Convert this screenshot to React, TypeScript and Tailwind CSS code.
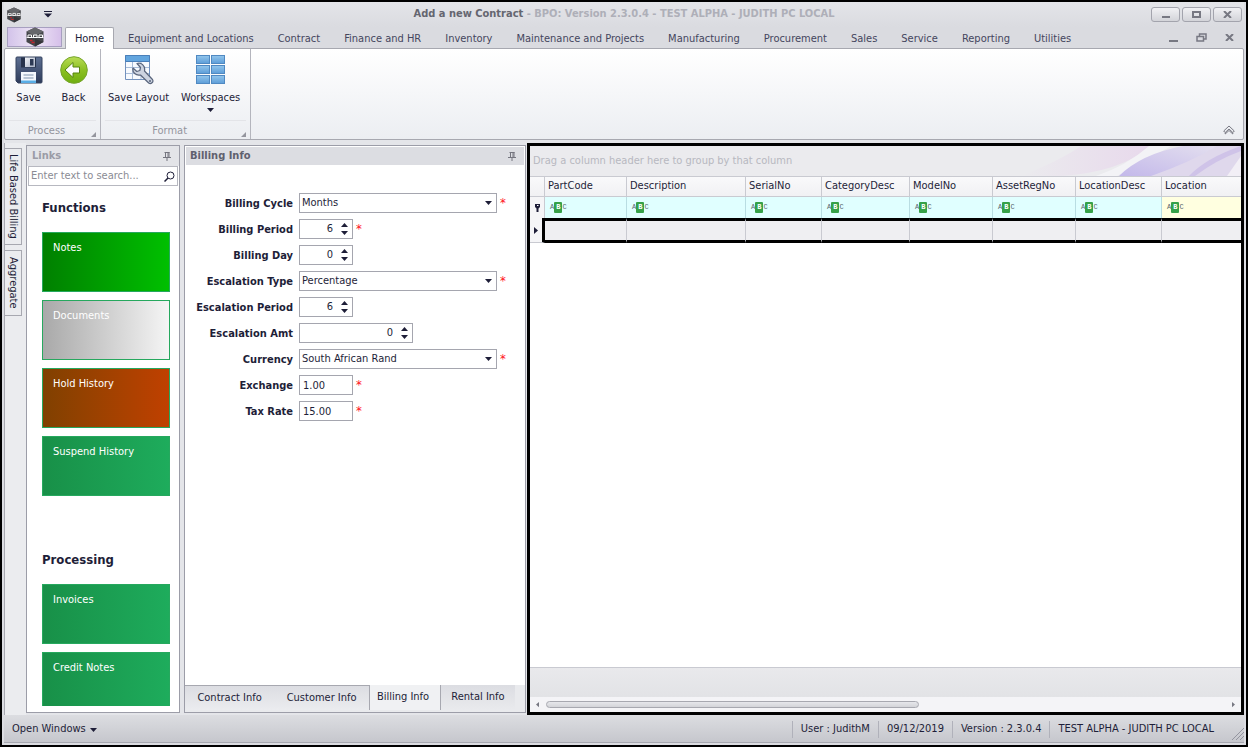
import { useState } from 'react';
import type { ReactNode } from 'react';

const ribbonTabs = [
  'Equipment and Locations',
  'Contract',
  'Finance and HR',
  'Inventory',
  'Maintenance and Projects',
  'Manufacturing',
  'Procurement',
  'Sales',
  'Service',
  'Reporting',
  'Utilities',
];

const functionTiles = [
  { label: 'Notes', color: 'from-[#008000] to-[#00c000]' },
  { label: 'Documents', color: 'from-[#a9a9a9] to-[#f5f5f5]' },
  { label: 'Hold History', color: 'from-[#804000] to-[#c04000]' },
  { label: 'Suspend History', color: 'from-[#189048] to-[#1eac5c]' },
];

const processingTiles = [
  { label: 'Invoices', color: 'from-[#189048] to-[#1eac5c]' },
  { label: 'Credit Notes', color: 'from-[#189048] to-[#1eac5c]' },
];

const columns = [
  { name: 'PartCode', width: 'w-[82px]' },
  { name: 'Description', width: 'w-[119px]' },
  { name: 'SerialNo', width: 'w-[76px]' },
  { name: 'CategoryDesc', width: 'w-[88px]' },
  { name: 'ModelNo', width: 'w-[83px]' },
  { name: 'AssetRegNo', width: 'w-[83px]' },
  { name: 'LocationDesc', width: 'w-[86px]' },
  { name: 'Location', width: '' },
];

// Hexagonal application logo
function Logo({ className }: { className: string }) {
  return (
    <svg viewBox="0 0 20 20" className={className} aria-hidden="true">
      <path d="M10 0.5 18.5 4.5V15L10 19.5 1.5 15V4.5Z" fill="#45464a" />
      <path d="M10 0.5 18.5 4.5 10 9 1.5 4.5Z" fill="#66676b" />
      <path d="M10 12 18.5 15 10 19.5Z" fill="#343538" />
      <path d="M1.500 10.500h17" stroke="#e8e8ea" strokeWidth="1" />
      <path d="M3 8h3.500v2.500H3zM8.500 8H12v2.500H8.500zM14 8h3.500v2.500H14z" fill="none" stroke="#fff" />
      <path d="M5 13.500h2.500M6.500 15.500h3" stroke="#c4252c" strokeWidth="1.300" />
    </svg>
  );
}

function SaveIcon() {
  return (
    <svg viewBox="0 0 28 28" className="size-7" aria-hidden="true">
      <defs>
        <linearGradient id="disk" x1="0" y1="0" x2="0" y2="1">
          <stop offset="0" stopColor="#5d6f92" />
          <stop offset="1" stopColor="#2d3b5a" />
        </linearGradient>
        <linearGradient id="shutter" x1="0" y1="0" x2="1" y2="1">
          <stop offset="0" stopColor="#f2f4f8" />
          <stop offset="1" stopColor="#a9b3c6" />
        </linearGradient>
      </defs>
      <path d="M2 1h24q1 0 1 1v24q0 1-1 1H3L1 25V2Q1 1 2 1Z" fill="url(#disk)" stroke="#35435f" />
      <path d="M6 1.500h15v10H6z" fill="#26324b" />
      <path d="M10 1.500h10v9.500H10z" fill="url(#shutter)" />
      <path d="M15 3h3.500v6.500H15z" fill="#2c3954" />
      <path d="M6 16h15v11H6z" fill="#f4f8fd" />
      <path d="M6 24.500h15v2.500H6z" fill="#59aee6" />
      <path d="M8.500 19h10M8.500 22h10" stroke="#7f93ad" />
    </svg>
  );
}

function BackIcon() {
  return (
    <svg viewBox="0 0 28 28" className="size-7" aria-hidden="true">
      <defs>
        <linearGradient id="ball" x1="0" y1="0" x2="0" y2="1">
          <stop offset="0" stopColor="#b9dc55" />
          <stop offset=".5" stopColor="#8cc022" />
          <stop offset="1" stopColor="#6fae10" />
        </linearGradient>
      </defs>
      <circle cx="14" cy="14" r="13.300" fill="url(#ball)" stroke="#76a52c" />
      <path d="M5 14 13 6.500v4.500h6.500v6H13v4.500Z" fill="#fff" stroke="#56840f" strokeLinejoin="round" />
    </svg>
  );
}

function LayoutIcon() {
  return (
    <svg viewBox="0 0 30 30" className="h-[30px] w-[30px]" aria-hidden="true">
      <path d="M1.500 .5h24v24h-24z" fill="#f7fafe" stroke="#7291bd" />
      <path d="M1.500 .5h24v6h-24z" fill="#62a5de" stroke="#4a7fb9" />
      <path d="M2 12.500h23M2 18.500h23M8.500 7v17M17 7v17" stroke="#a8bcd8" />
      <path
        d="M13 8.500c4-1.500 8.500 2 7.500 7.500l8 8.500c1.500 2.500-1.500 5-3.800 3.500L16.500 20c-4.500 1-8.500-2.500-7.500-7l3.800 3.500 3-1 .700-3Z"
        fill="#ccd3e0"
        stroke="#59657c"
        strokeWidth="1.200"
        strokeLinejoin="round"
      />
      <circle cx="26" cy="26" r="1" fill="#59657c" />
    </svg>
  );
}

function WorkspacesIcon() {
  return (
    <svg viewBox="0 0 30 30" className="h-[30px] w-[30px]" aria-hidden="true">
      <defs>
        <linearGradient id="pane" x1="0" y1="0" x2="0" y2="1">
          <stop offset="0" stopColor="#93c6ec" />
          <stop offset="1" stopColor="#5d9dd8" />
        </linearGradient>
      </defs>
      {[0.5, 10.5, 20.5].map((y) => (
        <g key={y} fill="url(#pane)" stroke="#5089c2">
          <rect x="0.5" y={y} width="13" height="8" />
          <rect x="15.5" y={y} width="13" height="8" />
        </g>
      ))}
    </svg>
  );
}

function Caret({ up = false, className = '' }: { up?: boolean; className?: string }) {
  return (
    <svg viewBox="0 0 7 4" className={`h-1 w-[7px] shrink-0 ${className}`} aria-hidden="true">
      <path d={up ? 'M0 4h7L3.500 0Z' : 'M0 0h7L3.500 4Z'} fill="currentColor" />
    </svg>
  );
}

function Pin() {
  return (
    <svg viewBox="0 0 8 9" className="h-[9px] w-2 text-[#74757f]" aria-hidden="true">
      <path d="M1.500 .5h5M2.500 0v5M5 0v5M6 0v5M0 5.500h8M4 6v3" fill="none" stroke="currentColor" />
    </svg>
  );
}

function RibbonButton({ icon, label, drop }: { icon: ReactNode; label: string; drop?: boolean }) {
  return (
    <button className="flex min-w-[45px] flex-col items-center px-1.5">
      <span className="flex h-[30px] items-center">{icon}</span>
      <span className="mt-[3px] leading-5 whitespace-nowrap">{label}</span>
      {drop && <Caret />}
    </button>
  );
}

function RibbonGroup({ caption, children }: { caption: string; children: ReactNode }) {
  return (
    <div className="flex flex-col border-r border-[#b4b5bd]">
      <div className="flex flex-1 pt-1.5 pr-1 pl-px">{children}</div>
      <div className="relative mx-1 border-t border-[#e3e4e8] pt-px pr-3 text-center leading-[17px] text-[#94959e]">
        {caption}
        <svg viewBox="0 0 5 5" className="absolute right-0 bottom-0.5 size-[5px]" aria-hidden="true">
          <path d="M5 0v5H0Z" fill="#94959e" />
        </svg>
      </div>
    </div>
  );
}

function Tile({ label, color }: { label: string; color: string }) {
  return (
    <button
      className={`flex h-[60px] w-full shrink-0 items-start border border-[#26a85e] bg-linear-to-r px-2.5 py-[7px] text-left leading-4 text-white ${color}`}
    >
      {label}
    </button>
  );
}

function Required() {
  return <span className="ml-[3px] text-[13px] leading-5 text-[#ff1020]">*</span>;
}

function Field({ id, label, required, children }: { id: string; label: string; required?: boolean; children: ReactNode }) {
  return (
    <div className="flex h-5 items-center">
      <label htmlFor={id} className="w-[108px] shrink-0 pt-0.5 text-right font-bold whitespace-nowrap">
        {label}
      </label>
      <div className="ml-1.5 flex">
        {children}
        {required && <Required />}
      </div>
    </div>
  );
}

function Select({ id, value }: { id: string; value: string }) {
  return (
    <div className="relative flex">
      <select id={id} className="h-5 w-[198px] appearance-none border border-[#a5a6af] bg-white pl-0.5">
        <option>{value}</option>
      </select>
      <Caret className="pointer-events-none absolute top-2 right-[5px]" />
    </div>
  );
}

function Spin({ id, initial, width }: { id: string; initial: number; width: string }) {
  const [value, setValue] = useState(initial);
  return (
    <div className={`flex h-5 border border-[#a5a6af] bg-white ${width}`}>
      <input
        id={id}
        value={value}
        onChange={(e) => setValue(Number(e.target.value) || 0)}
        className="min-w-0 flex-1 pt-px pr-[3px] text-right"
      />
      <div className="flex w-4 flex-col items-center justify-evenly">
        <button aria-label="Increase" onClick={() => setValue(value + 1)}>
          <Caret up />
        </button>
        <button aria-label="Decrease" onClick={() => setValue(value - 1)}>
          <Caret />
        </button>
      </div>
    </div>
  );
}

function TextField({ id, value }: { id: string; value: string }) {
  return <input id={id} defaultValue={value} className="h-5 w-[54px] border border-[#a5a6af] bg-white px-[3px]" />;
}

// Text filter marker shown in the grid's filter row
function FilterMark() {
  return (
    <span className="flex items-center font-['Liberation_Mono',monospace] text-[7px] leading-[11px] text-[#56646c]">
      A<b className="rounded-[1px] bg-[#36a148] px-[2px] text-white">B</b>C
    </span>
  );
}

function WindowButton({ label, children }: { label: string; children: ReactNode }) {
  return (
    <button
      aria-label={label}
      className="flex h-[15px] w-[29px] items-center justify-center rounded-[3px] border border-[#a3a4ad] bg-linear-to-b from-[#f1f1f4] to-[#d3d4d9] text-[#777882]"
    >
      {children}
    </button>
  );
}

const closeMark = (
  <svg viewBox="0 0 9 7" className="h-[7px] w-[9px]" aria-hidden="true">
    <path d="M1 0 8 7M8 0 1 7" stroke="currentColor" strokeWidth="2" />
  </svg>
);

export default function App() {
  return (
    <div className="flex h-screen flex-col border-2 border-black bg-[#dcdde2] px-0.5 font-['DejaVu_Sans_Condensed','DejaVu_Sans',sans-serif] text-[11px] text-[#1e1e38]">
      {/* Title bar */}
      <header className="flex h-[25px] shrink-0 items-center bg-linear-to-b from-[#e4e5e9] to-[#dadbe0] px-0.5">
        <div className="flex w-24 items-center">
          <Logo className="size-4" />
          <button aria-label="Customize toolbar" className="ml-[22px]">
            <svg viewBox="0 0 8 7" className="h-[7px] w-2" aria-hidden="true">
              <path d="M0 .5h8" stroke="currentColor" />
              <path d="M0 2.500h8L4 6.500Z" fill="currentColor" />
            </svg>
          </button>
        </div>
        <h1 className="flex-1 text-center font-bold whitespace-nowrap text-[#aeafb8]">
          <span className="text-[#656670]">Add a new Contract</span> - BPO: Version 2.3.0.4 - TEST ALPHA - JUDITH PC LOCAL
        </h1>
        <div className="flex w-24 justify-end gap-0.5">
          <WindowButton label="Minimize">
            <span className="mt-1 h-0.5 w-2 bg-current" />
          </WindowButton>
          <WindowButton label="Maximize">
            <span className="h-[7px] w-[9px] border-2 border-current" />
          </WindowButton>
          <WindowButton label="Close">{closeMark}</WindowButton>
        </div>
      </header>

      {/* Ribbon tabs */}
      <nav className="flex h-[21px] shrink-0 items-end bg-[#dadbe0] pl-[3px] text-[#45465e]">
        <button
          aria-label="Application menu"
          className="mb-px flex h-5 w-[55px] items-center justify-center border border-[#a79fc0] bg-linear-to-r from-[#d3c3ea] via-[#eee6f5] to-[#d6c0ea]"
        >
          <Logo className="size-5" />
        </button>
        <button className="z-10 -mb-px ml-[3px] h-[22px] w-[49px] rounded-t-xs border border-b-0 border-[#a7a8b0] bg-white pt-0.5 text-[#1e1e38]">
          Home
        </button>
        <div className="flex h-full items-center gap-6 pt-1 pl-3.5 whitespace-nowrap">
          {ribbonTabs.map((tab) => (
            <button key={tab}>{tab}</button>
          ))}
        </div>
        <div className="mb-1.5 ml-auto flex items-center gap-[18px] pr-2.5 text-[#777882]">
          <button aria-label="Minimize document">
            <span className="mt-1.5 block h-0.5 w-[9px] bg-current" />
          </button>
          <button aria-label="Restore document">
            <svg viewBox="0 0 11 9" className="h-[9px] w-[11px]" fill="none" stroke="currentColor" strokeWidth="1.5" aria-hidden="true">
              <path d="M3.500 3V1h6.500v5H8M1 3.500h6.500v4.500H1Z" />
            </svg>
          </button>
          <button aria-label="Close document">{closeMark}</button>
        </div>
      </nav>

      {/* Ribbon */}
      <section className="flex h-[92px] shrink-0 rounded-xs border border-[#a7a8b0] bg-linear-to-b from-white to-[#eceef2]">
        <RibbonGroup caption="Process">
          <RibbonButton icon={<SaveIcon />} label="Save" />
          <RibbonButton icon={<BackIcon />} label="Back" />
        </RibbonGroup>
        <RibbonGroup caption="Format">
          <RibbonButton icon={<LayoutIcon />} label="Save Layout" />
          <RibbonButton icon={<WorkspacesIcon />} label="Workspaces" drop />
        </RibbonGroup>
        <button aria-label="Collapse ribbon" className="mt-auto mr-2 mb-1 ml-auto text-[#777882]">
          <svg viewBox="0 0 12 10" className="h-2.5 w-3" fill="none" stroke="currentColor" aria-hidden="true">
            <path d="M.7 6 6 1l5.300 5-1.500 1.500L6 4 2.200 7.500ZM2.200 7.500v1.500L6 5.500 9.800 9V7.500" />
          </svg>
        </button>
      </section>

      <main className="flex min-h-0 flex-1 bg-[#e4e5e9] pt-[3px]">
        {/* Collapsed side panels */}
        <div className="flex w-[22px] shrink-0 flex-col gap-[5px] border-l border-[#a7a8b0] bg-[#ebecef] pt-[5px]">
          <button className="h-[97px] w-[17px] border border-l-0 border-[#a7a8b0] [writing-mode:vertical-rl]">Life Based Billing</button>
          <button className="h-[66px] w-[17px] border border-l-0 border-[#a7a8b0] [writing-mode:vertical-rl]">Aggregate</button>
        </div>

        {/* Links panel */}
        <aside className="mt-0.5 mb-0.5 flex w-[154px] shrink-0 flex-col border border-[#9c9da8] bg-white">
          <div className="flex h-5 shrink-0 items-center justify-between bg-[#e3e4e8] pr-2 pl-[5px] font-bold text-[#9b9ca6]">
            <h2>Links</h2>
            <Pin />
          </div>
          <label className="mx-px flex h-5 shrink-0 items-center border border-[#b7b8c0]">
            <input aria-label="Search links" placeholder="Enter text to search..." className="min-w-0 flex-1 pl-0.5 placeholder:text-[#8a8b94]" />
            <svg viewBox="0 0 11 11" className="mr-0.5 size-[11px]" fill="none" stroke="currentColor" aria-hidden="true">
              <circle cx="6.500" cy="4.500" r="3.500" />
              <path d="M4 7 .5 10.500" strokeWidth="1.500" />
            </svg>
          </label>
          <div className="mb-1.5 flex min-h-0 flex-1 flex-col gap-2 overflow-hidden pr-[9px] pl-[15px]">
            <h3 className="mt-3 mb-1.5 text-[13px] leading-5 font-bold">Functions</h3>
            {functionTiles.map((tile) => (
              <Tile key={tile.label} {...tile} />
            ))}
            <h3 className="mt-[46px] mb-1.5 text-[13px] leading-5 font-bold">Processing</h3>
            {processingTiles.map((tile) => (
              <Tile key={tile.label} {...tile} />
            ))}
          </div>
        </aside>

        {/* Billing info panel */}
        <section className="mt-0.5 mb-0.5 ml-1 flex w-[342px] shrink-0 flex-col border border-[#9c9da8] bg-white">
          <div className="m-px flex h-[18px] shrink-0 items-center justify-between bg-[#dcdde2] pr-2 pl-1 font-bold text-[#5f606e]">
            <h2>Billing Info</h2>
            <Pin />
          </div>
          <form className="flex flex-1 flex-col gap-1.5 pt-[27px]">
            <Field id="cycle" label="Billing Cycle" required>
              <Select id="cycle" value="Months" />
            </Field>
            <Field id="period" label="Billing Period" required>
              <Spin id="period" initial={6} width="w-[54px]" />
            </Field>
            <Field id="day" label="Billing Day">
              <Spin id="day" initial={0} width="w-[54px]" />
            </Field>
            <Field id="esc-type" label="Escalation Type" required>
              <Select id="esc-type" value="Percentage" />
            </Field>
            <Field id="esc-period" label="Escalation Period">
              <Spin id="esc-period" initial={6} width="w-[54px]" />
            </Field>
            <Field id="esc-amt" label="Escalation Amt">
              <Spin id="esc-amt" initial={0} width="w-[114px]" />
            </Field>
            <Field id="currency" label="Currency" required>
              <Select id="currency" value="South African Rand" />
            </Field>
            <Field id="exchange" label="Exchange" required>
              <TextField id="exchange" value="1.00" />
            </Field>
            <Field id="tax" label="Tax Rate" required>
              <TextField id="tax" value="15.00" />
            </Field>
          </form>
          <div className="flex h-[27px] shrink-0 bg-[#e9eaed] pb-0.5">
            <div className="flex w-[185px] justify-around border-t border-r border-[#a7a8b0] bg-linear-to-b from-[#dcdde2] to-[#ebecef]">
              <button>Contract Info</button>
              <button>Customer Info</button>
            </div>
            <button className="w-[71px] border-r border-[#a7a8b0] bg-[#f0f1f3] pr-1">Billing Info</button>
            <button className="w-[74px] bg-linear-to-b from-[#dcdde2] to-[#e9eaed]">Rental Info</button>
          </div>
        </section>

        {/* Asset grid */}
        <section className="ml-px flex min-w-0 flex-1 flex-col overflow-hidden border-[3px] border-black bg-white">
          <div className="relative flex h-[30px] shrink-0 items-center overflow-hidden bg-[#ebebee] pl-[3px] text-[#b7b8c0]">
            <svg viewBox="0 0 240 30" className="absolute top-0 right-0 h-[30px] w-60" aria-hidden="true">
              <defs>
                <linearGradient id="violet" x1="0" y1="1" x2="1" y2="0">
                  <stop offset="0" stopColor="#c3b8ea" />
                  <stop offset="1" stopColor="#e4e0ef" />
                </linearGradient>
                <linearGradient id="pink" x1="0" y1="0" x2="1" y2="0">
                  <stop offset="0" stopColor="#ebebee" />
                  <stop offset="1" stopColor="#e8d9ec" />
                </linearGradient>
              </defs>
              <path d="M60 30Q120 26 150 0H80Q60 14 20 30Z" fill="url(#pink)" />
              <path d="M95 30Q125 20 148 0h22Q140 18 116 30Z" fill="#f3f3f6" />
              <path d="M118 30Q140 8 182 0h38Q200 18 168 30Z" fill="url(#violet)" />
              <path d="M150 30Q190 16 216 0h24v30Z" fill="#dfd8ec" />
              <path d="M188 30Q205 12 240 0v5Q215 14 194 30Z" fill="#cfc3e8" />
              <path d="M226 30 240 10v20Z" fill="#f2eff6" />
            </svg>
            <span className="relative">Drag a column header here to group by that column</span>
          </div>
          <table className="w-full shrink-0 table-fixed border-separate border-spacing-0 text-left">
            <thead>
              <tr className="h-[21px] bg-linear-to-b from-[#fafafb] to-[#f0f0f3]">
                <th className="w-[15px] border-y border-r border-[#c9cad1]" />
                {columns.map((col) => (
                  <th
                    key={col.name}
                    className={`overflow-hidden border-y border-r border-[#c9cad1] p-0 pl-[3px] font-normal whitespace-nowrap last:border-r-0 ${col.width}`}
                  >
                    {col.name}
                  </th>
                ))}
              </tr>
            </thead>
            <tbody>
              <tr className="h-[21px] bg-[#e0ffff]">
                <td className="border-r border-[#c9cad1] bg-[#f5f5f7] p-0">
                  <svg viewBox="0 0 7 8" className="mx-auto h-2 w-[7px]" aria-hidden="true">
                    <path d="M1 0h5v3L4.500 4.500V8h-2V4.500L1 3Z" fill="currentColor" />
                    <path d="M3 1.500h1.500" stroke="#fff" />
                  </svg>
                </td>
                {columns.map((col) => (
                  <td key={col.name} className="border-r border-[#b9dde2] p-0 pl-[5px] last:border-r-0 last:bg-[#ffffe0]">
                    <FilterMark />
                  </td>
                ))}
              </tr>
              <tr className="h-[25px] bg-[#efeff2]">
                <td className="border-r-[3px] border-b border-r-black border-b-[#c9cad1] bg-[#f5f5f7] p-0">
                  <svg viewBox="0 0 4 7" className="mx-auto h-[7px] w-1" aria-hidden="true">
                    <path d="M0 0v7l4-3.500Z" fill="currentColor" />
                  </svg>
                </td>
                {columns.map((col) => (
                  <td key={col.name} className="border-y-[3px] border-r border-y-black border-r-[#c9cad1] p-0 last:border-r-0" />
                ))}
              </tr>
            </tbody>
          </table>
          <div className="mt-auto h-[30px] shrink-0 border-t border-[#c9cad1] bg-linear-to-b from-[#e9e9ec] to-[#e2e3e6]" />
          <div className="flex h-[15px] shrink-0 items-center bg-[#f4f4f7] px-1.5 text-[#777882]">
            <svg viewBox="0 0 4 7" className="h-[7px] w-[3px]" aria-hidden="true">
              <path d="M4 0v7L0 3.500Z" fill="currentColor" />
            </svg>
            <div className="mx-[7px] flex-1">
              <div className="h-[7px] w-[55%] rounded-full border border-[#a7a8b0] bg-linear-to-b from-[#e6e7eb] to-[#d3d4d9]" />
            </div>
            <svg viewBox="0 0 4 7" className="h-[7px] w-[3px]" aria-hidden="true">
              <path d="M0 0v7l4-3.500Z" fill="currentColor" />
            </svg>
          </div>
        </section>
      </main>

      {/* Status bar */}
      <footer className="mb-0.5 flex h-7 shrink-0 items-center border-b border-[#a7a8b0] bg-linear-to-b from-[#dcdde1] to-[#c6c7cd] pt-0.5">
        <button className="flex items-center gap-1 pl-2">
          Open Windows
          <Caret />
        </button>
        <div className="ml-auto flex whitespace-nowrap">
          <span className="border-l border-[#b0b1ba] px-2">User : JudithM</span>
          <span className="border-l border-[#b0b1ba] px-2">09/12/2019</span>
          <span className="border-l border-[#b0b1ba] px-2">Version : 2.3.0.4</span>
          <span className="border-l border-[#b0b1ba] px-2">TEST ALPHA - JUDITH PC LOCAL</span>
        </div>
        <svg viewBox="0 0 12 12" className="mt-2 ml-2.5 size-3 text-[#9495a0]" stroke="currentColor" aria-hidden="true">
          <path d="M0 12 12 0M4 12l8-8M8 12l4-4" />
        </svg>
      </footer>
    </div>
  );
}
